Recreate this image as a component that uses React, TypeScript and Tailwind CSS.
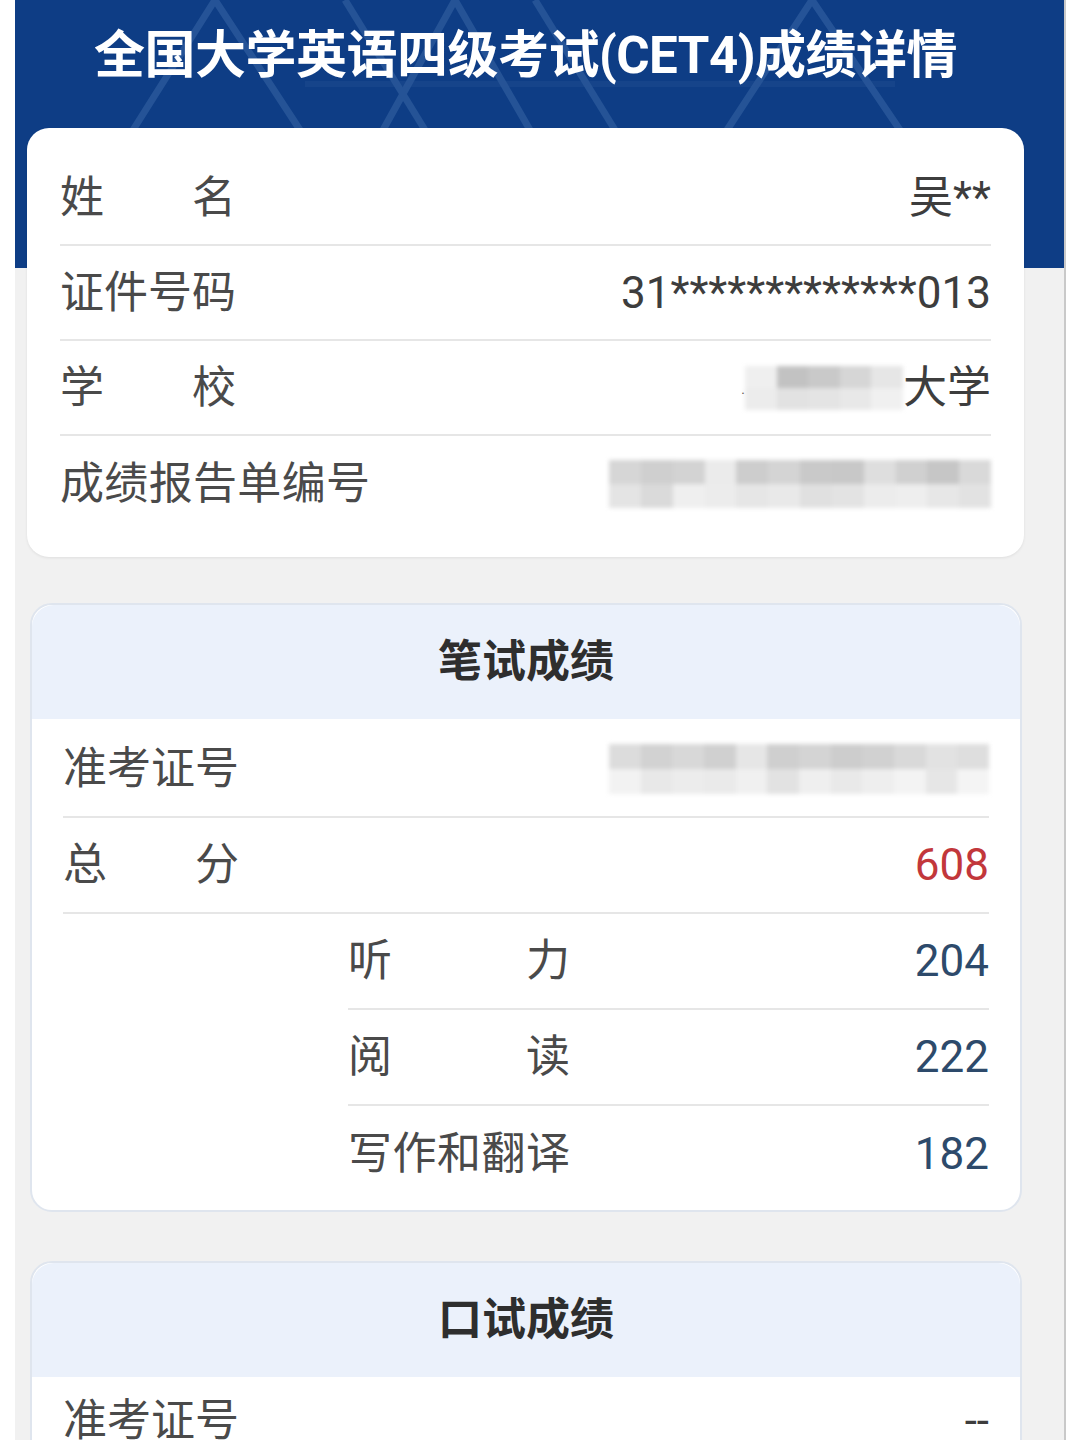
import React from "react";

const font = "font-['Roboto','Noto_Sans_CJK_SC',sans-serif]";

function Label({ text, width }: { text: string; width: string }) {
  return (
    <span className={`flex justify-between ${width}`}>
      {text.split("").map((c, i) => (
        <span key={i}>{c}</span>
      ))}
    </span>
  );
}

// pixelated privacy mask
function Mosaic({ shades, cols, className }: { shades: string[]; cols: string; className: string }) {
  return (
    <span className={`grid ${cols} blur-[2px] ${className}`}>
      {shades.map((s, i) => (
        <span key={i} className={s} />
      ))}
    </span>
  );
}

const reportShades = [
  "bg-[#d6d6d6]", "bg-[#cfcfcf]", "bg-[#d3d3d3]", "bg-[#ebebeb]", "bg-[#cdcdcd]", "bg-[#d4d4d4]",
  "bg-[#c9c9c9]", "bg-[#c8c8c8]", "bg-[#dedede]", "bg-[#d0d0d0]", "bg-[#c6c6c6]", "bg-[#d9d9d9]",
  "bg-[#e4e4e4]", "bg-[#dadada]", "bg-[#efefef]", "bg-[#ececec]", "bg-[#e6e6e6]", "bg-[#e9e9e9]",
  "bg-[#e0e0e0]", "bg-[#e3e3e3]", "bg-[#ececec]", "bg-[#eeeeee]", "bg-[#e7e7e7]", "bg-[#e2e2e2]",
];

const admitShades = [
  "bg-[#dcdcdc]", "bg-[#d2d2d2]", "bg-[#d8d8d8]", "bg-[#d0d0d0]", "bg-[#e6e6e6]", "bg-[#cfcfcf]",
  "bg-[#d4d4d4]", "bg-[#cdcdcd]", "bg-[#d1d1d1]", "bg-[#d9d9d9]", "bg-[#e2e2e2]", "bg-[#dedede]",
  "bg-[#f2f2f2]", "bg-[#e8e8e8]", "bg-[#ececec]", "bg-[#eaeaea]", "bg-[#f0f0f0]", "bg-[#e2e2e2]",
  "bg-[#efefef]", "bg-[#e9e9e9]", "bg-[#eeeeee]", "bg-[#f3f3f3]", "bg-[#e6e6e6]", "bg-[#f4f4f4]",
];

const schoolShades = [
  "bg-[#efefef]", "bg-[#c2c2c2]", "bg-[#c9c9c9]", "bg-[#d6d6d6]", "bg-[#e6e6e6]",
  "bg-[#ececec]", "bg-[#e2e2e2]", "bg-[#e4e4e4]", "bg-[#e8e8e8]", "bg-[#f0f0f0]",
];

function Row({
  label,
  children,
  last,
  labelWidth = "w-[176px]",
  height = "h-[95px]",
}: {
  label: string;
  children?: React.ReactNode;
  last?: boolean;
  labelWidth?: string;
  height?: string;
}) {
  return (
    <div
      className={`flex ${height} items-center justify-between ${last ? "" : "border-b-2 border-[#e6e6e6]"}`}
    >
      <Label text={label} width={labelWidth} />
      <div className="flex items-center text-[#3d3d3d]">{children}</div>
    </div>
  );
}

function SectionHead({ title }: { title: string }) {
  return (
    <div className="flex h-[114px] items-center justify-center rounded-t-[22px] bg-[#ebf1fb] text-[44px] font-bold text-[#2e2e2e]">
      {title}
    </div>
  );
}

export default function App() {
  return (
    <div className={`flex h-[1440px] overflow-hidden bg-white ${font} text-[44px] leading-none text-[#4a4a4a]`}>
      <div className="ml-[15px] w-[1051px] border-r-2 border-[#c9c9c9] bg-[#f1f1f1]">
        <header className="relative h-[268px] bg-[#0e3d85]">
          <svg className="absolute inset-0" width="1049" height="268" viewBox="0 0 1049 268">
            <g stroke="#2f5d9e" strokeWidth="7" fill="none" opacity="0.7">
              <polyline points="118,130 200,0 285,130" />
              <polyline points="368,130 440,0 515,130" />
              <polyline points="520,0 600,130" />
              <polyline points="712,130 797,0 885,130" />
              <polyline points="330,0 410,130" />
            </g>
            <line x1="290" y1="84" x2="880" y2="84" stroke="#2a5697" strokeWidth="6" opacity="0.3" />
          </svg>
          <h1 className="relative ml-[12px] w-[997px] pt-[27px] text-center text-[51px] font-bold leading-[58px] tracking-[-0.5px] text-white">
            全国大学英语四级考试(CET4)成绩详情
          </h1>
        </header>

        <div className="relative -mt-[140px] flex flex-col">
          {/* personal info */}
          <section className="ml-[12px] w-[997px] rounded-[22px] bg-white px-[33px] pb-[26px] pt-[23px] shadow-[0_1px_3px_rgba(0,0,0,0.08)]">
            <Row label="姓名">吴**</Row>
            <Row label="证件号码">31*************013</Row>
            <Row label="学校">
              <span className="mb-[14px] self-end text-[14px]">.</span>
              <Mosaic shades={schoolShades} cols="grid-cols-5" className="h-[44px] w-[158px]" />
              <span>大学</span>
            </Row>
            <Row label="成绩报告单编号" labelWidth="w-[310px]" last>
              <Mosaic shades={reportShades} cols="grid-cols-12" className="h-[48px] w-[382px]" />
            </Row>
          </section>

          {/* written test */}
          <section className="ml-[15px] mt-[46px] w-[992px] rounded-[22px] border-2 border-[#dfe5ee] bg-white">
            <SectionHead title="笔试成绩" />
            <div className="px-[31px] pb-[8px] pt-[3px]">
              <Row label="准考证号" height="h-[96px]">
                <Mosaic shades={admitShades} cols="grid-cols-12" className="h-[50px] w-[380px]" />
              </Row>
              <Row label="总分" height="h-[96px]">
                <span className="text-[#c2373b]">608</span>
              </Row>
              <div className="pl-[285px]">
                <Row label="听力" labelWidth="w-[222px]" height="h-[96px]">
                  <span className="text-[#2d4a6b]">204</span>
                </Row>
                <Row label="阅读" labelWidth="w-[222px]" height="h-[96px]">
                  <span className="text-[#2d4a6b]">222</span>
                </Row>
                <Row label="写作和翻译" labelWidth="w-[222px]" height="h-[96px]" last>
                  <span className="text-[#2d4a6b]">182</span>
                </Row>
              </div>
            </div>
          </section>

          {/* oral test */}
          <section className="ml-[15px] mt-[49px] w-[992px] rounded-[22px] border-2 border-[#dfe5ee] bg-white">
            <SectionHead title="口试成绩" />
            <div className="px-[31px]">
              <Row label="准考证号" height="h-[90px]">--</Row>
            </div>
          </section>
        </div>
      </div>
    </div>
  );
}
